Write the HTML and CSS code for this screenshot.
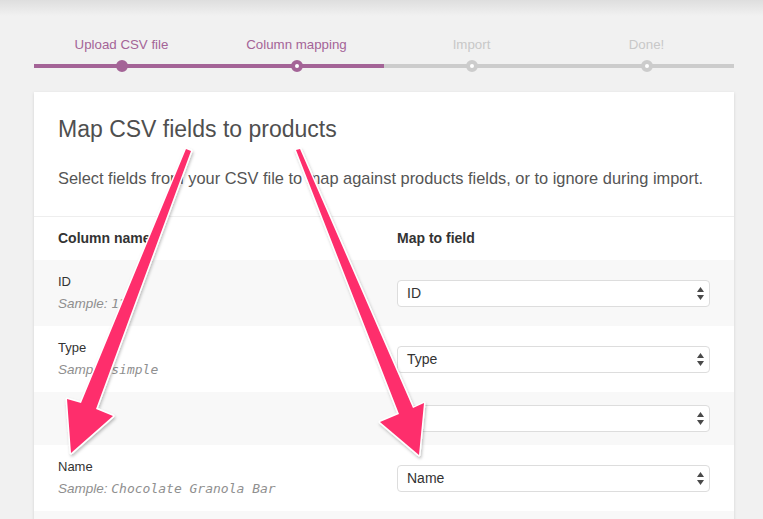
FILE: index.html
```html
<!DOCTYPE html>
<html lang="en">
<head>
<meta charset="utf-8">
<title>Map CSV fields to products</title>
<link rel="stylesheet" href="styles.css">
</head>
<body>
<ol class="steps">
  <li class="done">Upload CSV file</li>
  <li class="active">Column mapping</li>
  <li>Import</li>
  <li>Done!</li>
</ol>

<div class="card">
  <header class="intro">
    <h2>Map CSV fields to products</h2>
    <p>Select fields from your CSV file to map against products fields, or to ignore during import.</p>
  </header>
  <table class="mapping">
    <thead>
      <tr><th class="col-name">Column name</th><th>Map to field</th></tr>
    </thead>
    <tbody>
      <tr>
        <td class="col-name"><div class="label">ID</div><div class="sample">Sample: <code>12</code></div></td>
        <td><div class="select"><span>ID</span><svg class="updown" viewBox="0 0 7 13" width="7" height="13"><polygon points="0,5 3.5,0 7,5"/><polygon points="0,8 3.5,13 7,8"/></svg></div></td>
      </tr>
      <tr>
        <td class="col-name"><div class="label">Type</div><div class="sample">Sample: <code>simple</code></div></td>
        <td><div class="select"><span>Type</span><svg class="updown" viewBox="0 0 7 13" width="7" height="13"><polygon points="0,5 3.5,0 7,5"/><polygon points="0,8 3.5,13 7,8"/></svg></div></td>
      </tr>
      <tr>
        <td class="col-name"></td>
        <td><div class="select"><span></span><svg class="updown" viewBox="0 0 7 13" width="7" height="13"><polygon points="0,5 3.5,0 7,5"/><polygon points="0,8 3.5,13 7,8"/></svg></div></td>
      </tr>
      <tr>
        <td class="col-name"><div class="label">Name</div><div class="sample">Sample: <code>Chocolate Granola Bar</code></div></td>
        <td><div class="select"><span>Name</span><svg class="updown" viewBox="0 0 7 13" width="7" height="13"><polygon points="0,5 3.5,0 7,5"/><polygon points="0,8 3.5,13 7,8"/></svg></div></td>
      </tr>
      <tr class="spacer"><td class="col-name"></td><td></td></tr>
    </tbody>
  </table>
</div>

<svg class="annotations" viewBox="0 0 763 519" width="763" height="519" aria-hidden="true">
  <defs>
    <filter id="arrowShadow" x="-20%" y="-20%" width="140%" height="140%">
      <feDropShadow dx="1" dy="2" stdDeviation="1.6" flood-color="#000" flood-opacity="0.25"/>
    </filter>
  </defs>
  <g fill="#fe2d6c" stroke="#fff" stroke-width="3" stroke-linejoin="round" paint-order="stroke" filter="url(#arrowShadow)">
    <polygon points="186,149 191,151 96,409 113,416 71,453 67,399 81,403"/>
    <polygon points="296,150 300,149 413,408 424,403 419,455 380,422 399,414"/>
  </g>
</svg>
</body>
</html>
```

FILE: styles.css
```css
html, body {
  margin: 0;
  padding: 0;
}

body {
  width: 763px;
  height: 519px;
  background: linear-gradient(#dedede 0, #f1f1f1 16px) no-repeat, #f1f1f1;
  font-family: "Liberation Sans", Arial, sans-serif;
  color: #555;
  overflow: hidden;
}

/* ---------- Stepper ---------- */
.steps {
  display: flex;
  list-style: none;
  margin: 0 29px 0 34px;
  padding: 0;
}

.steps li {
  position: relative;
  flex: 1;
  text-align: center;
  font-size: 13.3px;
  line-height: 16px;
  color: #c8c8c8;
  padding: 37px 0 11px;
  border-bottom: 4px solid #ccc;
}

.steps li::before {
  content: "";
  position: absolute;
  left: calc(50% - 6px);
  bottom: -8px;
  width: 12px;
  height: 12px;
  box-sizing: border-box;
  border-radius: 50%;
  background: #fff;
  border: 4px solid #ccc;
}

.steps li.done,
.steps li.active {
  color: #a46497;
  border-bottom-color: #a46497;
}

.steps li.done::before {
  background: #a46497;
  border-color: #a46497;
}

.steps li.active::before {
  border-color: #a46497;
}

/* ---------- Card ---------- */
.card {
  width: 700px;
  margin: 24px 0 0 34px;
  background: #fff;
  box-shadow: 0 1px 3px rgba(0, 0, 0, 0.13);
}

.intro {
  padding: 23px 24px 26px;
  border-bottom: 1px solid #eee;
}

.intro h2 {
  margin: 0;
  font-size: 23px;
  line-height: 28px;
  font-weight: normal;
  color: #4f4f4f;
}

.intro p {
  margin: 23px 0 0;
  font-size: 16.4px;
  line-height: 24px;
  color: #555;
}

/* ---------- Mapping table ---------- */
.mapping {
  width: 100%;
  border-collapse: collapse;
  border-spacing: 0;
}

.mapping th,
.mapping td {
  padding: 13px 24px;
  text-align: left;
  vertical-align: middle;
}

.mapping th {
  font-size: 14px;
  line-height: 17px;
  font-weight: bold;
  color: #333;
}

.mapping .col-name {
  width: 291px;
}

.mapping tbody tr:nth-child(odd) {
  background: #f8f8f8;
}

.mapping tr.spacer td {
  height: 40px;
}

.label {
  font-size: 13px;
  line-height: 18px;
  color: #333;
}

.sample {
  margin-top: 4px;
  font-size: 13.5px;
  line-height: 18px;
  font-style: italic;
  color: #8f8f8f;
}

.sample code {
  font-family: "DejaVu Sans Mono", "Liberation Mono", monospace;
  font-size: 13px;
  font-style: italic;
}

.select {
  display: flex;
  align-items: center;
  justify-content: space-between;
  height: 27px;
  box-sizing: border-box;
  padding: 0 5px 0 9px;
  border: 1px solid #ddd;
  border-radius: 4px;
  background: #fff;
  font-size: 14px;
  color: #333;
}

.updown {
  fill: #4a4a4a;
}

/* ---------- Annotation overlay ---------- */
.annotations {
  position: absolute;
  top: 0;
  left: 0;
  pointer-events: none;
}
```
